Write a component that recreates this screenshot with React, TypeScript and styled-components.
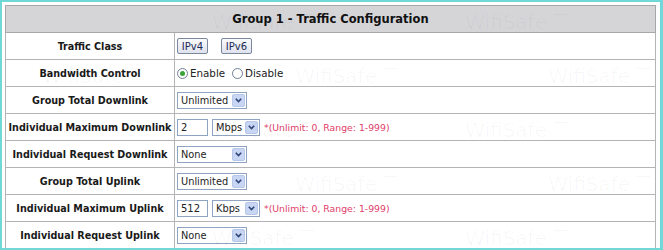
import React from 'react';
import styled, { createGlobalStyle } from 'styled-components';

const GlobalStyle = createGlobalStyle`
    html, body {
        margin: 0;
        padding: 0;
        background: #ffffff;
    }
`;

const Frame = styled.div`
    position: relative;
    width: 663px;
    height: 250px;
    box-sizing: border-box;
    border: 2px solid #70d8d6;
    border-right-width: 3px;
    padding: 3px 4px 0 3px;
    overflow: hidden;
    font-family: "DejaVu Sans", Verdana, sans-serif;
`;

const Table = styled.table`
    width: 651px;
    border-collapse: collapse;
    table-layout: fixed;
`;

const LabelCol = styled.col`
    width: 169px;
`;

const HeadCell = styled.th`
    height: 26px;
    padding: 0;
    background: #d5d5d8;
    border: 1px solid #a8a8a8;
    font-size: 11.5px;
    font-weight: bold;
    color: #111;
    text-align: center;
`;

const LabelCell = styled.td`
    height: 26px;
    padding: 0;
    border: 1px solid #b4b4b4;
    font-family: "DejaVu Sans Condensed", "DejaVu Sans", sans-serif;
    font-size: 10.7px;
    font-weight: bold;
    color: #1a1a1a;
    text-align: center;
    white-space: nowrap;
`;

const ValueCell = styled.td`
    height: 26px;
    padding: 0 0 0 2px;
    border: 1px solid #b4b4b4;
    font-size: 10px;
    color: #222;
`;

const Line = styled.div`
    display: flex;
    align-items: center;
    gap: 4px;
`;

const Button = styled.span<{ $gap?: number }>`
    display: inline-flex;
    align-items: center;
    justify-content: center;
    width: 31px;
    height: 16px;
    margin-right: ${({ $gap }) => $gap ?? 0}px;
    box-sizing: border-box;
    border: 1px solid #7b879c;
    border-radius: 2px;
    background: linear-gradient(#fbfbfd, #dfe2ec);
    font-size: 10px;
    color: #1c2a55;
`;

const Radio = styled.label`
    display: inline-flex;
    align-items: center;
    gap: 2px;
    margin-right: 3px;
    font-size: 10.3px;
    color: #222;
`;

const Dot = styled.span<{ $on: boolean }>`
    position: relative;
    width: 11px;
    height: 11px;
    box-sizing: border-box;
    border: 1px solid #6f7f96;
    border-radius: 50%;
    background: #fff;
    &::after {
        content: '';
        display: ${({ $on }) => ($on ? 'block' : 'none')};
        position: absolute;
        left: 2px;
        top: 2px;
        width: 5px;
        height: 5px;
        border-radius: 50%;
        background: #3aa33a;
    }
`;

const SelectBox = styled.span<{ $w: number }>`
    display: inline-flex;
    align-items: center;
    justify-content: space-between;
    width: ${({ $w }) => $w}px;
    height: 17px;
    box-sizing: border-box;
    padding-left: 3px;
    border: 1px solid #8ea4c2;
    background: #fff;
    font-size: 9.8px;
    color: #222;
`;

const Arrow = styled.span`
    display: inline-flex;
    align-items: center;
    justify-content: center;
    width: 13px;
    height: 13px;
    margin-right: 1px;
    box-sizing: border-box;
    border: 1px solid #b6c7ea;
    border-radius: 2px;
    background: #c8d6f4;
`;

const TextInput = styled.span`
    display: inline-flex;
    align-items: center;
    width: 31px;
    height: 17px;
    box-sizing: border-box;
    padding-left: 3px;
    border: 1px solid #8ea4c2;
    background: #fff;
    font-size: 10px;
    color: #222;
`;

const Hint = styled.span`
    font-size: 9.3px;
    color: #e0406a;
`;

const Watermark = styled.div`
    position: absolute;
    inset: 0;
    pointer-events: none;
    display: flex;
    flex-direction: column;
    padding-top: 8px;
    gap: 30px;
`;

const MarkRow = styled.div<{ $shift: number }>`
    display: flex;
    gap: 150px;
    margin-left: ${({ $shift }) => $shift}px;
    white-space: nowrap;
    font-family: "DejaVu Sans", sans-serif;
    font-size: 20px;
    line-height: 24px;
    color: rgba(0, 0, 0, 0.03);
`;

const Select = ({ value, w }: { value: string; w: number }) => (
    <SelectBox $w={w}>
        {value}
        <Arrow>
            <svg width="7" height="5" viewBox="0 0 7 5">
                <path d="M0.8 0.8 L3.5 3.6 L6.2 0.8" fill="none" stroke="#2f4476" strokeWidth="1.6" />
            </svg>
        </Arrow>
    </SelectBox>
);

const marks = [0, 1, 2, 3, 4];

export default function App() {
    return (
        <>
            <GlobalStyle />
            <Frame>
                <Table>
                    <colgroup>
                        <LabelCol />
                        <col />
                    </colgroup>
                    <tbody>
                        <tr>
                            <HeadCell colSpan={2}>Group 1 - Traffic Configuration</HeadCell>
                        </tr>
                        <tr>
                            <LabelCell>Traffic Class</LabelCell>
                            <ValueCell>
                                <Line>
                                    <Button $gap={9}>IPv4</Button>
                                    <Button>IPv6</Button>
                                </Line>
                            </ValueCell>
                        </tr>
                        <tr>
                            <LabelCell>Bandwidth Control</LabelCell>
                            <ValueCell>
                                <Line>
                                    <Radio><Dot $on />Enable</Radio>
                                    <Radio><Dot $on={false} />Disable</Radio>
                                </Line>
                            </ValueCell>
                        </tr>
                        <tr>
                            <LabelCell>Group Total Downlink</LabelCell>
                            <ValueCell>
                                <Line><Select value="Unlimited" w={70} /></Line>
                            </ValueCell>
                        </tr>
                        <tr>
                            <LabelCell>Individual Maximum Downlink</LabelCell>
                            <ValueCell>
                                <Line>
                                    <TextInput>2</TextInput>
                                    <Select value="Mbps" w={48} />
                                    <Hint>*(Unlimit: 0, Range: 1-999)</Hint>
                                </Line>
                            </ValueCell>
                        </tr>
                        <tr>
                            <LabelCell>Individual Request Downlink</LabelCell>
                            <ValueCell>
                                <Line><Select value="None" w={70} /></Line>
                            </ValueCell>
                        </tr>
                        <tr>
                            <LabelCell>Group Total Uplink</LabelCell>
                            <ValueCell>
                                <Line><Select value="Unlimited" w={70} /></Line>
                            </ValueCell>
                        </tr>
                        <tr>
                            <LabelCell>Individual Maximum Uplink</LabelCell>
                            <ValueCell>
                                <Line>
                                    <TextInput>512</TextInput>
                                    <Select value="Kbps" w={48} />
                                    <Hint>*(Unlimit: 0, Range: 1-999)</Hint>
                                </Line>
                            </ValueCell>
                        </tr>
                        <tr>
                            <LabelCell>Individual Request Uplink</LabelCell>
                            <ValueCell>
                                <Line><Select value="None" w={70} /></Line>
                            </ValueCell>
                        </tr>
                    </tbody>
                </Table>
                <Watermark>
                    {marks.map((i) => (
                        <MarkRow key={i} $shift={i % 2 === 0 ? 210 : 40}>
                            <span>WifiSafe ⛉</span>
                            <span>WifiSafe ⛉</span>
                            <span>WifiSafe ⛉</span>
                        </MarkRow>
                    ))}
                </Watermark>
            </Frame>
        </>
    );
}
